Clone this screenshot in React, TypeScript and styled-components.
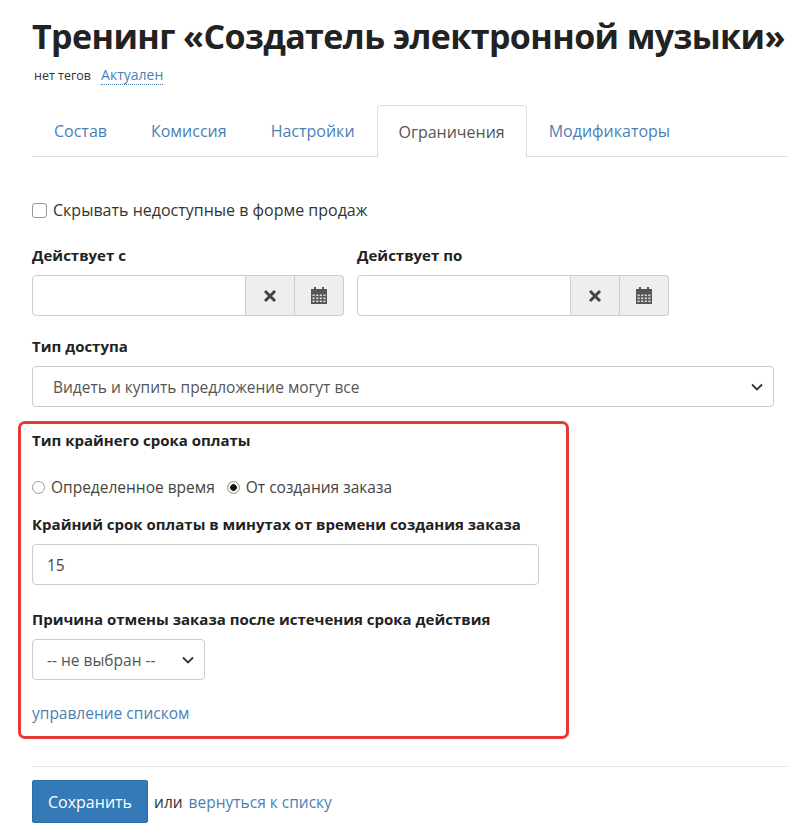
import React from 'react';
import styled, { createGlobalStyle } from 'styled-components';

const Global = createGlobalStyle`
  body { margin: 0; background: #fff; font-family: "Open Sans", "Liberation Sans", sans-serif; color: #333; overflow: hidden; }
  * { box-sizing: border-box; }
`;

const Page = styled.div`
  width: 788px;
  padding: 0 0 0 32px;
  overflow: hidden;
`;

const Title = styled.h1`
  margin: 14px 0 0;
  font-size: 34px;
  font-weight: 700;
  white-space: nowrap;
  color: #222;
  line-height: 44px;
  letter-spacing: -0.6px;
`;

const Tags = styled.div`
  display: flex;
  gap: 10px;
  align-items: baseline;
  margin: 7px 0 0 2px;
  font-size: 12.5px;
  color: #333;
  a {
    color: #4a7fb5;
    font-size: 14px;
    text-decoration: none;
    border-bottom: 1px dotted #4a7fb5;
  }
`;

const Tabs = styled.div`
  display: flex;
  margin-top: 20px;
  width: 756px;
  border-bottom: 1px solid #ddd;
  height: 52px;
`;

const Tab = styled.div<{ active?: boolean }>`
  padding: 0 21px;
  display: flex;
  align-items: center;
  font-size: 16px;
  color: ${p => (p.active ? '#555' : '#4a7fb5')};
  border: 1px solid ${p => (p.active ? '#ddd' : 'transparent')};
  border-bottom: none;
  border-radius: 4px 4px 0 0;
  background: ${p => (p.active ? '#fff' : 'transparent')};
  height: ${p => (p.active ? '52px' : '51px')};
`;

const Form = styled.div`
  width: 742px;
  padding-top: 42px;
`;

const CheckRow = styled.label`
  display: flex;
  align-items: center;
  gap: 6px;
  font-size: 16px;
  color: #333;
`;

const Box = styled.span`
  width: 15px;
  height: 15px;
  border: 1px solid #999;
  border-radius: 3px;
`;

const Row = styled.div`
  display: flex;
  gap: 13px;
  margin-top: 24px;
`;

const Group = styled.div``;

const Label = styled.div`
  font-weight: 700;
  font-size: 15px;
  color: #222;
  margin-bottom: 10px;
`;

const DateBox = styled.div`
  display: flex;
  width: 312px;
  height: 41px;
`;

const Input = styled.div<{ w?: string }>`
  width: ${p => p.w || '100%'};
  height: 41px;
  border: 1px solid #ccc;
  border-radius: 4px;
  padding: 0 14px;
  display: flex;
  align-items: center;
  font-size: 15.5px;
  color: #444;
`;

const DateInput = styled(Input)`
  flex: 1;
  border-radius: 4px 0 0 4px;
`;

const AddonBtn = styled.div<{ last?: boolean }>`
  width: 49px;
  background: #eee;
  border: 1px solid #ccc;
  border-left: none;
  border-radius: ${p => (p.last ? '0 4px 4px 0' : '0')};
  display: flex;
  align-items: center;
  justify-content: center;
`;

const Select = styled.div<{ w: number; pl?: number }>`
  width: ${p => p.w}px;
  height: 41px;
  border: 1px solid #ccc;
  border-radius: 4px;
  padding: 0 10px 0 ${p => p.pl ?? 20}px;
  display: flex;
  align-items: center;
  justify-content: space-between;
  font-size: 15.5px;
  color: #555;
`;

const Section = styled.div<{ mt?: number }>`
  margin-top: ${p => p.mt ?? 20}px;
`;

const RedBox = styled.div`
  margin: 14px 0 0 -14px;
  width: 551px;
  border: 3px solid #e53935;
  border-radius: 7px;
  padding: 6px 27px 12px 11px;
`;

const Radios = styled.div`
  display: flex;
  gap: 12px;
  margin: 26px 0 16px;
  font-size: 15.5px;
`;

const Radio = styled.label`
  display: flex;
  align-items: center;
  gap: 6px;
  color: #444;
`;

const Dot = styled.span<{ on?: boolean }>`
  width: 13px;
  height: 13px;
  border-radius: 50%;
  border: 1px solid #999;
  background: ${p => (p.on ? 'radial-gradient(circle, #111 0 3px, #f3efe0 3.5px)' : '#fff')};
`;

const Link = styled.a`
  color: #4a7fb5;
  text-decoration: none;
  font-size: 15.5px;
`;

const LinkRow = styled.div`
  margin-top: 22px;
`;

const Footer = styled.div`
  margin-top: 27px;
  border-top: 1px solid #e5e5e5;
  padding-top: 13px;
  display: flex;
  align-items: center;
  gap: 6px;
  font-size: 15.5px;
  width: 756px;
`;

const SaveBtn = styled.button`
  background: #337ab7;
  color: #fff;
  border: 1px solid #2e6da4;
  height: 43px;
  padding: 0 15px;
  font-size: 16px;
  font-family: inherit;
  border-radius: 2px;
`;

const XIcon = () => (
  <svg width="14" height="14" viewBox="0 0 14 14"><path d="M2 2L12 12M12 2L2 12" stroke="#444" strokeWidth="3" /></svg>
);
const CalIcon = () => (
  <svg width="16" height="17" viewBox="0 0 16 17">
    <rect x="3" y="0" width="2" height="3" fill="#555" />
    <rect x="11" y="0" width="2" height="3" fill="#555" />
    <rect x="0" y="2" width="16" height="4" fill="#555" />
    <rect x="0" y="6" width="16" height="11" fill="#555" />
    {[0, 1, 2].map(r => [0, 1, 2, 3].map(c => (
      <rect key={r + '-' + c} x={1.5 + c * 3.6} y={7.5 + r * 3} width="2.2" height="1.6" fill="#ddd" />
    )))}
  </svg>
);
const Chevron = () => (
  <svg width="12" height="8" viewBox="0 0 12 8"><path d="M1 1.5L6 6.5L11 1.5" fill="none" stroke="#333" strokeWidth="1.8" /></svg>
);

const DateField = ({ label }: { label: string }) => (
  <Group>
    <Label>{label}</Label>
    <DateBox>
      <DateInput />
      <AddonBtn><XIcon /></AddonBtn>
      <AddonBtn last><CalIcon /></AddonBtn>
    </DateBox>
  </Group>
);

export default function App() {
  return (
    <Page>
      <Global />
      <Title>Тренинг «Создатель электронной музыки»</Title>
      <Tags>нет тегов <a>Актуален</a></Tags>
      <Tabs>
        <Tab>Состав</Tab>
        <Tab>Комиссия</Tab>
        <Tab>Настройки</Tab>
        <Tab active>Ограничения</Tab>
        <Tab>Модификаторы</Tab>
      </Tabs>
      <Form>
        <CheckRow><Box />Скрывать недоступные в форме продаж</CheckRow>
        <Row>
          <DateField label="Действует с" />
          <DateField label="Действует по" />
        </Row>
        <Section>
          <Label>Тип доступа</Label>
          <Select w={742}>Видеть и купить предложение могут все <Chevron /></Select>
        </Section>
        <RedBox>
          <Label>Тип крайнего срока оплаты</Label>
          <Radios>
            <Radio><Dot />Определенное время</Radio>
            <Radio><Dot on />От создания заказа</Radio>
          </Radios>
          <Label>Крайний срок оплаты в минутах от времени создания заказа</Label>
          <Input w="507px">15</Input>
          <Section mt={24}>
            <Label>Причина отмены заказа после истечения срока действия</Label>
            <Select w={173} pl={14}>-- не выбран -- <Chevron /></Select>
          </Section>
          <LinkRow><Link>управление списком</Link></LinkRow>
        </RedBox>
        <Footer>
          <SaveBtn>Сохранить</SaveBtn> или <Link>вернуться к списку</Link>
        </Footer>
      </Form>
    </Page>
  );
}
